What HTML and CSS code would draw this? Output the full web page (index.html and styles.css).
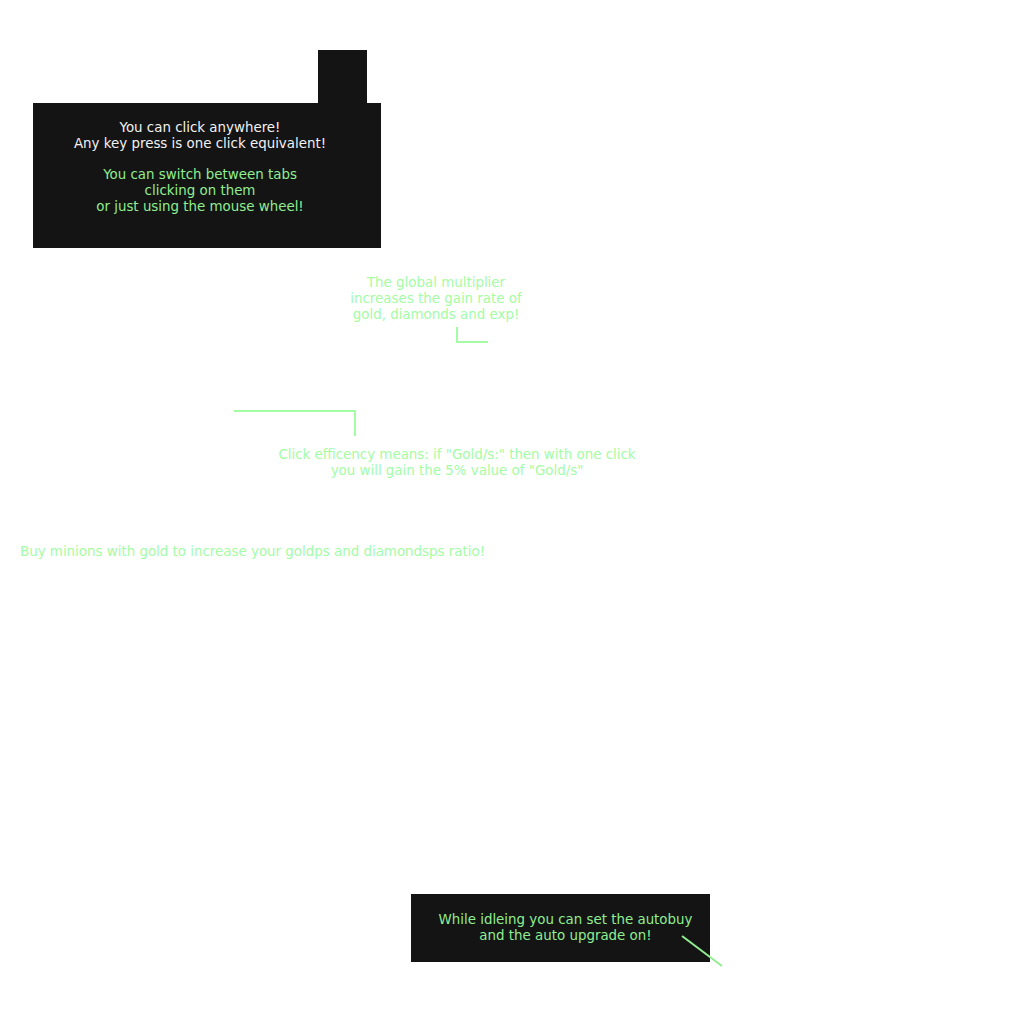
FILE: index.html
```html
<!DOCTYPE html>
<html>
<head>
<meta charset="utf-8">
<link rel="stylesheet" href="styles.css">
</head>
<body>
<div class="overlay">
  <div class="tab-marker"></div>
  <div class="box box-intro">
    <p class="white">You can click anywhere!<br>Any key press is one click equivalent!</p>
    <p class="green">You can switch between tabs<br>clicking on them<br>or just using the mouse wheel!</p>
  </div>

  <p class="hint hint-multiplier">The global multiplier<br>increases the gain rate of<br>gold, diamonds and exp!</p>
  <div class="corner corner-multiplier"></div>

  <div class="corner corner-click"></div>
  <p class="hint hint-click">Click efficency means: if "Gold/s:" then with one click<br>you will gain the 5% value of "Gold/s"</p>

  <p class="hint hint-minions">Buy minions with gold to increase your goldps and diamondsps ratio!</p>

  <div class="box box-idle">
    <p class="green">While idleing you can set the autobuy<br>and the auto upgrade on!</p>
  </div>
  <div class="pointer"></div>
</div>
</body>
</html>
```

FILE: styles.css
```css
html, body {
  margin: 0;
  padding: 0;
  background: #ffffff;
}
body {
  font-family: "DejaVu Sans", Verdana, sans-serif;
  font-size: 13.4px;
  line-height: 16px;
}
p { margin: 0; }
.overlay {
  position: relative;
  width: 1024px;
  height: 1024px;
}
.tab-marker {
  position: absolute;
  left: 318px;
  top: 50px;
  width: 49px;
  height: 53px;
  background: #141414;
}
.box {
  position: absolute;
  background: #141414;
  text-align: center;
  box-sizing: border-box;
}
.box-intro {
  left: 33px;
  top: 103px;
  width: 348px;
  height: 145px;
  padding: 17px 14px 0 0;
  display: flex;
  flex-direction: column;
  gap: 15px;
}
.white { color: #f2f2f2; }
.green { color: #90ee90; }
.box-idle {
  left: 411px;
  top: 894px;
  width: 299px;
  height: 68px;
  padding: 18px 0 0 10px;
}
.hint {
  position: absolute;
  color: #a4fca4;
  text-align: center;
  white-space: nowrap;
}
.hint-multiplier {
  left: 336px;
  top: 275px;
  width: 200px;
}
.hint-click {
  left: 257px;
  top: 447px;
  width: 400px;
}
.hint-minions {
  left: 20px;
  top: 544px;
  text-align: left;
}
.corner {
  position: absolute;
  box-sizing: border-box;
  border-color: #a4fca4;
  border-style: solid;
  border-width: 0;
}
.corner-multiplier {
  left: 456px;
  top: 327px;
  width: 32px;
  height: 16px;
  border-left-width: 2px;
  border-bottom-width: 2px;
}
.corner-click {
  left: 234px;
  top: 410px;
  width: 122px;
  height: 26px;
  border-top-width: 2px;
  border-right-width: 2px;
}
.pointer {
  position: absolute;
  left: 677px;
  top: 950px;
  width: 50px;
  height: 2px;
  background: #90ee90;
  transform: rotate(37deg);
}
```
